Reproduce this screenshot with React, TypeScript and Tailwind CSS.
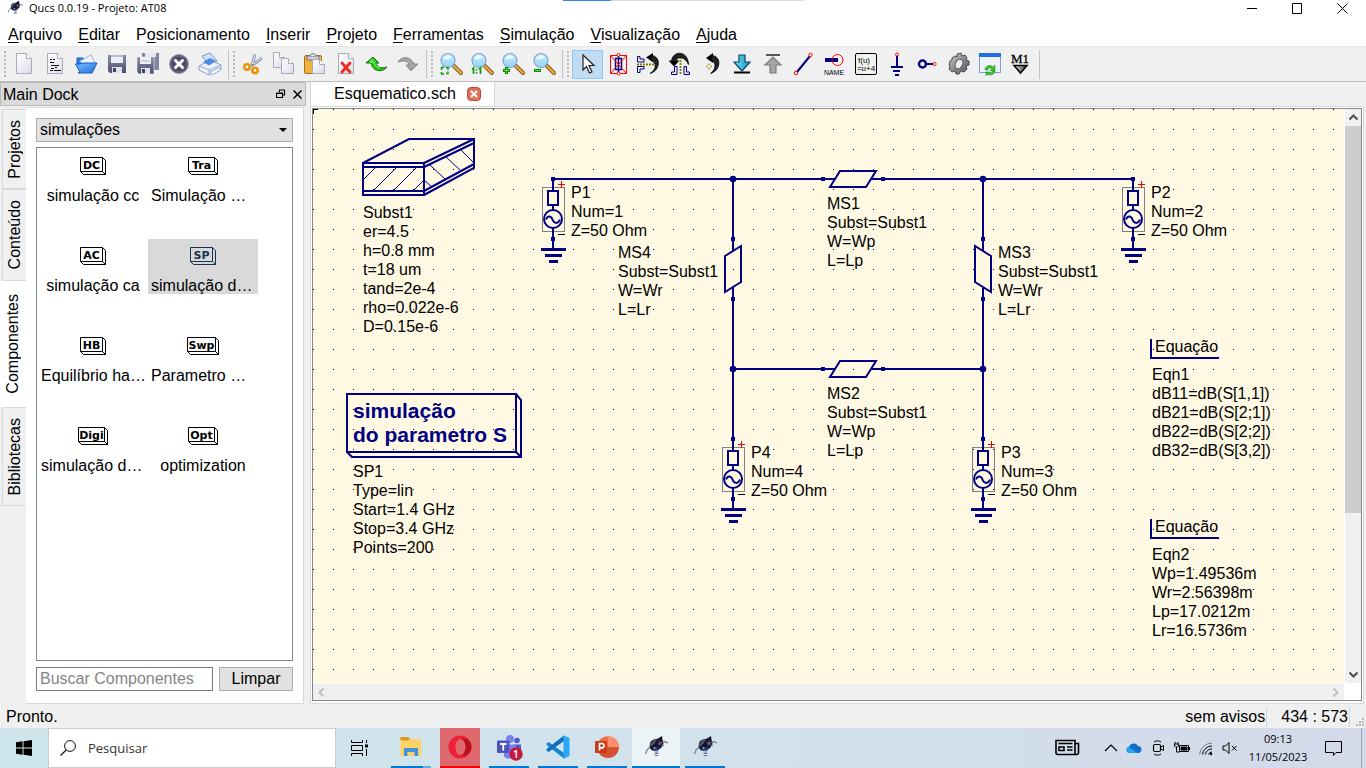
import React from 'react';

type Kids = { children?: React.ReactNode };

/* ---------- small drawing helpers ---------- */

function Ico({ children, size = 24 }: Kids & { size?: number }) {
  return (
    <svg width={size} height={size} viewBox="0 0 24 24" fill="none" aria-hidden="true" className="shrink-0 overflow-visible">
      {children}
    </svg>
  );
}

const NAVY = '#000080';

function Wasp({ size }: { size: number }) {
  return (
    <svg width={size} height={size} viewBox="0 0 24 24" fill="none" aria-hidden="true" className="shrink-0">
      <path d="M6 8c1-3 4-4 7-4l5-3 .5 3.500 1 4-2 4-4 3H8l-2.500-3z" fill="#17162c" />
      <path d="M6 9 9.500 5 13 5 9 10l-2 2z" fill="#55536b" />
      <path d="M14 8l2-2 1.500 2-2 3z" fill="#6d5a86" />
      <path d="M6 12 3 15 1.500 19" stroke="#7d7f93" strokeWidth="1.300" />
      <path d="M17 8l4-1.500L24 8M17 10l3 .5" stroke="#62607a" strokeWidth="1.100" />
      <path d="M9 12h5l1 2-2 2h-3z" fill="#24356f" />
      <path d="M12.500 15v6" stroke="#5a6a9a" strokeWidth="3.500" />
      <path d="M10.500 17h4M11 19.500h3.500" stroke="#f1f3fa" strokeWidth="1.200" />
      <circle cx="10.500" cy="13" r="1" fill="#8fb0e0" />
    </svg>
  );
}

function Page({ x = 5, y = 2, w = 15, h = 20 }: { x?: number; y?: number; w?: number; h?: number }) {
  const l = x - 0.5;
  const t = y - 0.5;
  return (
    <>
      <path d={`M${l} ${t}h${w - 5}l5 5v${h - 5}h-${w}z`} fill="url(#gPage)" stroke="#a9a9b8" />
      <path d={`M${l + w - 5} ${t}v5h5`} fill="#fff" stroke="#a9a9b8" />
    </>
  );
}

function Lens({ children }: Kids) {
  return (
    <Ico>
      <path d="M14 13l8 8" stroke="#8a5a12" strokeWidth="4" strokeLinecap="round" />
      <path d="M15 14l7 7" stroke="#e9a94a" strokeWidth="2.200" strokeLinecap="round" />
      <circle cx="9" cy="8.500" r="7" fill="url(#gLens)" stroke="#7fa6d8" strokeWidth="1.200" />
      <path d="M4 7a5.500 5.500 0 0 1 9-2c-3 2-5 3-9 2z" fill="#fff" opacity=".75" />
      {children}
    </Ico>
  );
}

function SharedPaints() {
  return (
    <svg width="0" height="0" className="absolute" aria-hidden="true">
      <defs>
        <linearGradient id="gPage" x1="0" y1="0" x2="1" y2="1">
          <stop offset="0" stopColor="#fff" />
          <stop offset="1" stopColor="#dcdcea" />
        </linearGradient>
        <linearGradient id="gLens" x1="0" y1="0" x2="0" y2="1">
          <stop offset="0" stopColor="#cdeafb" />
          <stop offset="1" stopColor="#8fd6f4" />
        </linearGradient>
        <linearGradient id="gFloppy" x1="0" y1="0" x2="0" y2="1">
          <stop offset="0" stopColor="#8b8ba5" />
          <stop offset="1" stopColor="#4f4f70" />
        </linearGradient>
        <linearGradient id="gFolder" x1="0" y1="0" x2="1" y2="1">
          <stop offset="0" stopColor="#7fc0ff" />
          <stop offset="1" stopColor="#1d6fe0" />
        </linearGradient>
        <linearGradient id="gSteel" x1="0" y1="0" x2="1" y2="1">
          <stop offset="0" stopColor="#d8d8d8" />
          <stop offset=".5" stopColor="#8a8a90" />
          <stop offset="1" stopColor="#55555c" />
        </linearGradient>
        <linearGradient id="gDown" x1="0" y1="0" x2="1" y2="0">
          <stop offset="0" stopColor="#7be3f7" />
          <stop offset="1" stopColor="#1793c4" />
        </linearGradient>
        <linearGradient id="gMark" x1="0" y1="0" x2="1" y2="0">
          <stop offset="0" stopColor="#e0e0e0" />
          <stop offset="1" stopColor="#3a3a3a" />
        </linearGradient>
        <pattern id="gridDots" width="20" height="20" patternUnits="userSpaceOnUse">
          <rect width="1" height="1" fill="#000" />
        </pattern>
      </defs>
    </svg>
  );
}

/* ---------- toolbar ---------- */

const fileTools: [string, React.ReactNode][] = [
  ['Novo', <Ico><Page /></Ico>],
  ['Novo texto', (
    <Ico>
      <Page />
      <path d="M7 7.500h2M10 7.500h2M7 10.500h4M8 13.500h8M8 16.500h3M12 15.500h2M7 18.500h3M11 18.500h7" stroke="#111" />
    </Ico>
  )],
  ['Abrir', (
    <Ico>
      <path d="M3 6h6l2 2h8v4H3z" fill="#2f7fe6" stroke="#1458b5" />
      <path d="M6 9 17 3l4 8-9 6z" fill="#eef4fc" stroke="#9fb6d6" />
      <path d="M6 20 1.500 12H6l3-1h14l-5 10H4z" fill="url(#gFolder)" stroke="#1458c5" />
    </Ico>
  )],
  ['Salvar', (
    <Ico>
      <path d="M3 3h18v18H5l-2-2z" fill="url(#gFloppy)" />
      <path d="M6 3h12v8H6z" fill="#eceff6" />
      <path d="M6 3h12v2H6z" fill="#b9bdd0" />
      <path d="M7 15h10v6H7z" fill="#dfe3ee" />
      <path d="M8 16h3v4H8z" fill="#42425f" />
    </Ico>
  )],
  ['Salvar tudo', (
    <Ico>
      <path d="M6 1h17v17H6z" fill="#8585a0" />
      <path d="M9 1h11v4H9z" fill="#e6e8f1" />
      <path d="M1 5h17v17H3l-2-2z" fill="url(#gFloppy)" stroke="#efeff5" strokeWidth=".6" />
      <path d="M4 5h11v7H4z" fill="#eceff6" />
      <path d="M5 9h9" stroke="#a9adc0" />
      <path d="M5 16h9v6H5z" fill="#dfe3ee" />
      <path d="M6 17h3v4H6z" fill="#42425f" />
    </Ico>
  )],
  ['Fechar', (
    <Ico>
      <circle cx="12" cy="12" r="9.500" fill="#4c4c68" stroke="#a3a3b5" />
      <circle cx="12" cy="12" r="8" stroke="#6d6d88" />
      <path d="M8.500 8.500l7 7M15.500 8.500l-7 7" stroke="#fff" strokeWidth="3" strokeLinecap="round" />
    </Ico>
  )],
  ['Imprimir', (
    <Ico>
      <path d="M4 4 12 1l7 8-8 4z" fill="#cfe3fb" stroke="#6d97d6" />
      <path d="M1 14 12 8l11 5v4l-12 6L1 18z" fill="#eef1f8" stroke="#8b9fca" />
      <path d="M1 14l10 4 12-5M11 18v5" stroke="#9aa9cf" />
      <path d="M5 10l7-4 6 3-7 4.500z" fill="#4a8ae6" />
      <path d="M12 20l9-4.500 2 2-8 5z" fill="#fff" stroke="#7fa2dc" />
    </Ico>
  )],
];

const editTools: [string, React.ReactNode][] = [
  ['Recortar', (
    <Ico>
      <path d="M14 2 11 14M21 6 10 14" stroke="#8e98a8" strokeWidth="3" />
      <path d="M14 2 11.500 12M21 6 12 12" stroke="#e8edf4" />
      <circle cx="6" cy="15" r="2.700" stroke="#e8960c" strokeWidth="2.600" />
      <circle cx="14" cy="18.500" r="2.700" stroke="#e8960c" strokeWidth="2.600" />
    </Ico>
  )],
  ['Copiar', (
    <Ico>
      <Page x={2} y={1} w={11} h={15} />
      <Page x={10} y={7} w={12} h={15} />
    </Ico>
  )],
  ['Colar', (
    <Ico>
      <rect x="1.500" y="3.500" width="17" height="18" rx="1.500" fill="#efb13c" stroke="#a9741a" />
      <path d="M4 4h12v4H4z" fill="#cfcfd8" stroke="#77777f" />
      <path d="M7 4c0-3 6-3 6 0" stroke="#77777f" fill="#e5e5ea" />
      <Page x={10} y={8} w={12} h={14} />
    </Ico>
  )],
  ['Apagar', (
    <Ico>
      <Page />
      <path d="M8 11l8 9M16 11l-8 9" stroke="#ee2b1a" strokeWidth="2.800" strokeLinecap="round" />
    </Ico>
  )],
  ['Desfazer', (
    <Ico>
      <path d="M1 11 8 5l6 6h-3c1 4 5 6 11 4-3 5-14 6-16-4z" fill="#28c41a" stroke="#0d7a0a" strokeLinejoin="round" />
      <path d="M8 7l-3 3h4c1 4 3 5 6 6" stroke="#a7f29b" />
    </Ico>
  )],
  ['Refazer', (
    <Ico>
      <path d="M22 12 15 19l-5-6h3c-1-4-5-5-11-3 3-6 13-6 16 2z" fill="#a6a6a6" stroke="#858585" strokeLinejoin="round" />
    </Ico>
  )],
];

const zoomTools: [string, React.ReactNode][] = [
  ['Ver tudo', <Lens><path d="M2.500 18v-2.500H5M7 15.500h2V18M2.500 20v2H5M7 21.500h2v-2" stroke="#159a10" strokeWidth="1.500" /></Lens>],
  ['Ver 1:1', (
    <Lens>
      <path d="M2 17.500 3.500 16v6M9 17.500 10.500 16v6M6.500 17v1.500M6.500 20v1.500" stroke="#159a10" strokeWidth="1.700" />
    </Lens>
  )],
  ['Aproximar', <Lens><path d="M2 18.500h7M5.500 15v7" stroke="#0c8a08" strokeWidth="3.200" /><path d="M3 18.500h5M5.500 16v5" stroke="#5fe04a" /></Lens>],
  ['Afastar', <Lens><path d="M2 18.500h7" stroke="#0c8a08" strokeWidth="3" /><path d="M3 18.500h5" stroke="#5fe04a" /></Lens>],
];

const drawTools: [string, React.ReactNode][] = [
  ['Selecionar', (
    <Ico>
      <path d="M8 3v15l3.500-3.500 3 6.500 2.500-1-3-6.500h5z" fill="#fff" stroke="#222" strokeWidth="1.200" />
    </Ico>
  )],
  ['Desativar', (
    <Ico>
      <path d="M12.500 2v20M9.500 6.500h6v11h-6z" stroke={NAVY} strokeWidth="1.500" />
      <path d="M4.500 3.500h16v18h-16zM4.500 3.500l16 18M20.500 3.500l-16 18" stroke="#ff0000" />
      <circle cx="12.500" cy="3" r="1.500" fill="#fff" stroke="#ff0000" />
      <circle cx="12.500" cy="21.500" r="1.500" fill="#fff" stroke="#ff0000" />
    </Ico>
  )],
  ['Espelhar no eixo X', (
    <Ico>
      <path d="M.5 10V4.500h2.500V7H7v3zM.5 20.500v-6H7v2.500H3v3.500z" stroke={NAVY} />
      <path d="M0 12.500h17" stroke="#808000" strokeWidth="1.800" strokeDasharray="2 1" />
      <path d="M9 5.500 16 1v9z" fill="#000" />
      <path d="M14 3.500c10 0 10 15-1 18 6-3.500 7.500-11 1-13z" fill="#222" stroke="#000" strokeWidth=".8" />
    </Ico>
  )],
  ['Espelhar no eixo Y', (
    <Ico>
      <path d="M3.500 22.500V20h3v-5.500H9v8zM21.500 22.500V20h-3v-5.500H16v8z" stroke={NAVY} />
      <path d="M12.500 5v18" stroke="#808000" strokeWidth="1.800" strokeDasharray="2 1" />
      <path d="M.5 8.500h11l-5.500 6z" fill="#000" />
      <path d="M3.500 9.500C4-1.500 20-2.500 20.500 12.500 17 4.500 9 3.500 8 9.500z" fill="#222" stroke="#000" strokeWidth=".8" />
    </Ico>
  )],
  ['Girar', (
    <Ico>
      <path d="M7 6 14 1v10z" fill="#000" />
      <path d="M12.500 3.500c10 0 10 15-1 18 5-3.500 6.500-11 1-13z" fill="#222" stroke="#000" strokeWidth=".8" />
      <path d="M10 11.500v6M7 14.500h6" stroke="#b39a3a" strokeWidth="1.500" />
      <path d="M10 13l1.500 1.500L10 16l-1.500-1.500z" fill="#fff" />
    </Ico>
  )],
  ['Entrar na hierarquia', (
    <Ico>
      <path d="M9 3h6v7h5l-8 9-8-9h5z" fill="url(#gDown)" stroke="#0b4a6a" strokeWidth="1.200" />
      <path d="M4 20.500h16" stroke="#000" strokeWidth="2" />
    </Ico>
  )],
  ['Sair da hierarquia', (
    <Ico>
      <path d="M9 21h6v-8h5l-8-8-8 8h5z" fill="#a5a5a5" stroke="#7b7b7b" strokeWidth="1.200" />
      <path d="M5 3h14" stroke="#555" strokeWidth="2" />
    </Ico>
  )],
  ['Fio', (
    <Ico>
      <path d="M5 20 18 4" stroke={NAVY} strokeWidth="2" />
      <circle cx="4" cy="21" r="1.700" stroke="#f00" fill="#fff" />
      <circle cx="18.500" cy="3" r="1.700" stroke="#f00" fill="#fff" />
    </Ico>
  )],
  ['Rótulo do fio', (
    <Ico>
      <path d="M2 8h13" stroke={NAVY} strokeWidth="4" />
      <circle cx="14.500" cy="8" r="5.500" stroke="#f00" />
      <text x="11" y="22.500" textAnchor="middle" fontFamily="Liberation Sans, sans-serif" fontSize="7" fill="#000">NAME</text>
    </Ico>
  )],
  ['Inserir equação', (
    <Ico>
      <rect x="1.500" y="1.500" width="21" height="21" rx="1.500" stroke="#000" />
      <text x="10" y="10.500" textAnchor="middle" fontFamily="Liberation Sans, sans-serif" fontSize="8" fill="#000">f(u)</text>
      <text x="12" y="19" textAnchor="middle" fontFamily="Liberation Sans, sans-serif" fontSize="8" fill="#000">=u+4</text>
    </Ico>
  )],
  ['Inserir terra', (
    <Ico>
      <path d="M12 4v11M6 15h12M8 19h7M10 23h4" stroke={NAVY} strokeWidth="2" />
      <circle cx="12" cy="2.500" r="1.500" stroke="#f00" fill="#fff" />
    </Ico>
  )],
  ['Inserir porta', (
    <Ico>
      <circle cx="6.500" cy="12" r="3.500" stroke={NAVY} strokeWidth="2.400" />
      <path d="M10.500 12H17" stroke={NAVY} strokeWidth="2" />
      <circle cx="18.500" cy="12" r="1.600" stroke="#f00" fill="#fff" />
    </Ico>
  )],
  ['Simular', (
    <Ico>
      <path
        d="M10 2l4-1 1 3 3-1 2 3-1 2 3 1v4l-3 1 1 3-3 3-3-1-2 3H9l-1-3-3 1-3-3 1-3-1-1 1-4 2-1V6l3-2 2 1z"
        fill="url(#gSteel)" stroke="#4d4d54"
      />
      <ellipse cx="12" cy="12" rx="3.500" ry="5" transform="rotate(25 12 12)" fill="#efefef" stroke="#5a5a60" />
    </Ico>
  )],
  ['Ver dados', (
    <Ico>
      <rect x="1.500" y="1.500" width="21" height="19" fill="#eef3fb" stroke="#7b9fdd" />
      <path d="M1 1h22v4H1z" fill="#1f6fe8" />
      <path d="M7 18c0-4 5-6 8-3l2-2v6h-5l2-2c-2-2-4-1-4 1z" fill="#35c425" stroke="#17820f" strokeWidth=".5" />
      <path d="M17 19c-1 4-5 5-8 3l-1 2v-4h4l-1 1c2 1 3 0 4-2z" fill="#35c425" stroke="#17820f" strokeWidth=".5" />
    </Ico>
  )],
  ['Marcador', (
    <Ico>
      <text x="11" y="11" textAnchor="middle" fontFamily="Liberation Serif, serif" fontSize="13" fill="#000" stroke="#000" strokeWidth=".3">M1</text>
      <path d="M5 13.500h13L11.500 21z" fill="url(#gMark)" stroke="#000" strokeWidth="1.500" />
    </Ico>
  )],
];

function ToolGroup({ tools, pressed }: { tools: [string, React.ReactNode][]; pressed?: string }) {
  return (
    <div className="flex items-center border-r border-[#c4c4c4] pr-0.5">
      <div className="ml-1 mr-0.5 h-[26px] w-[3px] border-l-2 border-dotted border-[#b9b9b9]" />
      {tools.map(([name, icon]) => (
        <button
          key={name}
          type="button"
          aria-label={name}
          className={
            name === pressed
              ? 'flex h-[29px] w-[31px] items-center justify-center border border-[#90c8f6] bg-[#c0dcf3] pb-px pr-px'
              : 'flex h-[29px] w-[31px] items-center justify-center pb-px pr-px'
          }
        >
          {icon}
        </button>
      ))}
    </div>
  );
}

/* ---------- dock ---------- */

function SimIcon({ label, w, dim }: { label: string; w: number; dim?: boolean }) {
  const c = dim ? '#16334f' : '#000';
  return (
    <svg width={w} height="18" viewBox={`0 0 ${w} 18`} fill="none" aria-hidden="true" className="shrink-0 overflow-visible">
      <path
        d={`M.5 .5H${w - 3.5}V14.500H.5zM${w - 3.5} .5L${w - 0.5} 3.500V17.500H3.500L.5 14.500M${w - 3.5} 14.500L${w - 0.5} 17.500`}
        stroke={c}
        fill={dim ? 'none' : '#fff'}
      />
      <text
        x={(w - 3) / 2}
        y="11.500"
        textAnchor="middle"
        fontFamily="DejaVu Sans, sans-serif"
        fontWeight="bold"
        fontSize="11"
        fill={c}
      >
        {label}
      </text>
    </svg>
  );
}

const components = [
  { tag: 'DC', w: 26, name: 'simulação cc' },
  { tag: 'Tra', w: 30, name: 'Simulação …', cut: true },
  { tag: 'AC', w: 26, name: 'simulação ca' },
  { tag: 'SP', w: 26, name: 'simulação d…', cut: true, selected: true },
  { tag: 'HB', w: 26, name: 'Equilíbrio ha…', cut: true },
  { tag: 'Swp', w: 32, name: 'Parametro …', cut: true },
  { tag: 'Digi', w: 30, name: 'simulação d…', cut: true },
  { tag: 'Opt', w: 30, name: 'optimization' },
];

const sideTabs = [
  { name: 'Projetos', h: 'h-20' },
  { name: 'Conteúdo', h: 'h-[92px]' },
  { name: 'Componentes', h: 'h-[126px]', on: true },
  { name: 'Bibliotecas', h: 'h-[99px]' },
];

function Dock() {
  return (
    <aside className="flex w-[306px] shrink-0 flex-col">
      <div className="flex h-6 items-center border border-[#bcbcbc] bg-[#dadada] pl-0.5">
        <h2 className="flex-1 pt-0.5 text-base leading-5">Main Dock</h2>
        <button type="button" aria-label="Destacar painel" className="flex h-4 w-4 items-center justify-center">
          <svg width="10" height="10" viewBox="0 0 10 10" fill="none">
            <path d="M3.500 3V1M8.500 1v5H7M3 1h6M.5 4.500h6v4h-6zM0 4h7" stroke="#000" strokeWidth="1.200" />
          </svg>
        </button>
        <button type="button" aria-label="Fechar painel" className="flex h-4 w-4 items-center justify-center">
          <svg width="9" height="9" viewBox="0 0 9 9" fill="none">
            <path d="M.5 .5l8 8M8.500 .5l-8 8" stroke="#000" strokeWidth="1.500" />
          </svg>
        </button>
      </div>
      <div className="flex flex-1 pt-px">
        <div role="tablist" aria-orientation="vertical" className="flex w-[26px] flex-col items-end pt-0.5">
          {sideTabs.map((t) => (
            <button
              key={t.name}
              type="button"
              role="tab"
              aria-selected={!!t.on}
              className={`${t.h} flex items-center justify-center border-[#d9d9d9] text-base leading-5 ${
                t.on ? 'w-full bg-white' : 'w-6 border border-r-0 bg-[#f0f0f0]'
              }`}
            >
              <span className="rotate-180 [writing-mode:vertical-rl]">{t.name}</span>
            </button>
          ))}
        </div>
        <div className="mr-0.5 flex flex-1 flex-col border border-l-0 border-[#d9d9d9] bg-white px-2.5 pb-3 pt-2.5">
          <div className="relative">
            <select
              aria-label="Categoria"
              className="block h-6 w-full appearance-none border border-[#adadad] bg-[#e1e1e1] px-[3px] text-base leading-5"
            >
              <option>simulações</option>
            </select>
            <svg width="8" height="4" viewBox="0 0 8 4" className="pointer-events-none absolute right-1.5 top-2.5">
              <path d="M0 0h8L4 4z" fill="#000" />
            </svg>
          </div>
          <div className="mt-[5px] flex-1 border border-[#828790] pl-px pt-px">
            <ul className="grid w-[220px] grid-cols-2 gap-y-[35px]">
              {components.map((c) => (
                <li
                  key={c.tag}
                  className={`flex h-[55px] flex-col items-center px-[3px] pt-2 ${c.selected ? 'bg-[#d9d9d9]' : ''}`}
                >
                  <SimIcon label={c.tag} w={c.w} dim={c.selected} />
                  <span className={`mt-[11px] w-full whitespace-nowrap text-base leading-5 ${c.cut ? 'text-left' : 'text-center'}`}>
                    {c.name}
                  </span>
                </li>
              ))}
            </ul>
          </div>
          <div className="mt-1.5 flex gap-1.5">
            <input
              type="text"
              aria-label="Buscar Componentes"
              placeholder="Buscar Componentes"
              className="h-6 w-[177px] border border-[#7a7a7a] bg-white px-[3px] text-base leading-5 placeholder:text-[#858585]"
            />
            <button type="button" className="h-6 flex-1 border border-[#adadad] bg-[#e1e1e1] text-base leading-5">
              Limpar
            </button>
          </div>
        </div>
      </div>
    </aside>
  );
}

/* ---------- schematic ---------- */

function Pin({ x, y }: { x: number; y: number }) {
  return <rect x={x - 2} y={y - 2} width="4" height="4" fill={NAVY} stroke="none" />;
}

function Joint({ x, y }: { x: number; y: number }) {
  return <circle cx={x} cy={y} r="3.300" fill={NAVY} />;
}

function PowerPort({ x, y }: { x: number; y: number }) {
  return (
    <g transform={`translate(${x} ${y})`} stroke={NAVY} strokeWidth="2">
      <rect x="-10.500" y="8.500" width="22" height="44" stroke="#808080" strokeWidth="1" />
      <path d="M0 0v12M-5 12H5V26H-5zM0 26v5M0 49V70" />
      <circle cx="0" cy="40" r="9" />
      <path d="M-7 40.500c1.500-4 5-4 6.500 0s5.500 5 7.500 0" />
      <path d="M-12 70.500H13M-8 76.500H9M-4 82.500H5" strokeWidth="3" />
      <path d="M5 5.500h7M8.500 2v7" stroke="#e00" strokeWidth="1" />
      <path d="M5 55.500h7" stroke="#000" strokeWidth="1" />
      <Pin x={0} y={0} />
      <Pin x={0} y={60} />
    </g>
  );
}

function LineH({ x, y }: { x: number; y: number }) {
  return (
    <g transform={`translate(${x} ${y})`}>
      <path d="M-30 0H-18M18 0H30M-13-8H23L13 8H-23z" stroke={NAVY} strokeWidth="2" />
      <Pin x={-30} y={0} />
      <Pin x={30} y={0} />
    </g>
  );
}

function LineV({ x, y, flip }: { x: number; y: number; flip?: boolean }) {
  return (
    <g transform={`translate(${x} ${y})`}>
      <path
        d={flip ? 'M0-30V-18M0 18V30M-8-23V13L8 23V-13z' : 'M0-30V-18M0 18V30M8-23V13L-8 23V-13z'}
        stroke={NAVY}
        strokeWidth="2"
      />
      <Pin x={0} y={-30} />
      <Pin x={0} y={30} />
    </g>
  );
}

const notes: { at: string; lines: string[] }[] = [
  { at: 'left-[50px] top-[94px]', lines: ['Subst1', 'er=4.5', 'h=0.8 mm', 't=18 um', 'tand=2e-4', 'rho=0.022e-6', 'D=0.15e-6'] },
  { at: 'left-[258px] top-[74px]', lines: ['P1', 'Num=1', 'Z=50 Ohm'] },
  { at: 'left-[305px] top-[134px]', lines: ['MS4', 'Subst=Subst1', 'W=Wr', 'L=Lr'] },
  { at: 'left-[514px] top-[85px]', lines: ['MS1', 'Subst=Subst1', 'W=Wp', 'L=Lp'] },
  { at: 'left-[685px] top-[134px]', lines: ['MS3', 'Subst=Subst1', 'W=Wr', 'L=Lr'] },
  { at: 'left-[838px] top-[74px]', lines: ['P2', 'Num=2', 'Z=50 Ohm'] },
  { at: 'left-[514px] top-[275px]', lines: ['MS2', 'Subst=Subst1', 'W=Wp', 'L=Lp'] },
  { at: 'left-[438px] top-[334px]', lines: ['P4', 'Num=4', 'Z=50 Ohm'] },
  { at: 'left-[688px] top-[334px]', lines: ['P3', 'Num=3', 'Z=50 Ohm'] },
  { at: 'left-[40px] top-[353px]', lines: ['SP1', 'Type=lin', 'Start=1.4 GHz', 'Stop=3.4 GHz', 'Points=200'] },
  { at: 'left-[842px] top-[228px]', lines: ['Equação'] },
  { at: 'left-[839px] top-[256px]', lines: ['Eqn1', 'dB11=dB(S[1,1])', 'dB21=dB(S[2;1])', 'dB22=dB(S[2;2])', 'dB32=dB(S[3,2])'] },
  { at: 'left-[842px] top-[408px]', lines: ['Equação'] },
  { at: 'left-[839px] top-[436px]', lines: ['Eqn2', 'Wp=1.49536m', 'Wr=2.56398m', 'Lp=17.0212m', 'Lr=16.5736m'] },
];

function Schematic() {
  return (
    <div className="relative min-w-0 flex-1 overflow-hidden bg-[#fff9e3]">
      <svg className="absolute inset-0 h-full w-full" fill="none" aria-hidden="true">
        <rect width="100%" height="100%" fill="url(#gridDots)" />
        <path d="M0 .5H5M.5 0V5" stroke="#000" />
        <g stroke={NAVY} strokeWidth="2">
          <path d="M240 70H510M570 70H820M420 70V130M420 190V330M670 70V130M670 190V330M420 260H510M570 260H670" />
          <path d="M50 54H111V86H50zM50 58H111M50 82H111M50 54 96 30H161V59L111 86M111 54 161 30M111 58 161 34M111 82 161 55" />
          <path d="M34 285H203V343H34zM203 285 208 291V348H39L34 343M203 343 208 348" />
          <path d="M838 230V249H906M838 410V429H906" />
        </g>
        <path
          d="M50 71 63 58M60 82 84 58M80 82 104 58M100 82 111 71M111 71 119 78M117 56 132 70M133 48 147 61M148 41 160 53"
          stroke={NAVY}
        />
        <Joint x={420} y={70} />
        <Joint x={670} y={70} />
        <Joint x={420} y={260} />
        <Joint x={670} y={260} />
        <PowerPort x={240} y={70} />
        <PowerPort x={820} y={70} />
        <PowerPort x={420} y={330} />
        <PowerPort x={670} y={330} />
        <LineH x={540} y={70} />
        <LineH x={540} y={260} />
        <LineV x={420} y={160} />
        <LineV x={670} y={160} flip />
      </svg>
      <div className="absolute left-10 top-[290px] whitespace-nowrap text-[21px] font-bold leading-6 text-[#000080]">
        simulação
        <br />
        do parametro S
      </div>
      {notes.map((n) => (
        <div key={n.at} className={`absolute whitespace-nowrap text-base leading-[19px] ${n.at}`}>
          {n.lines.map((l) => (
            <div key={l}>{l}</div>
          ))}
        </div>
      ))}
    </div>
  );
}

function Chevron({ d, tone }: { d: string; tone: string }) {
  return (
    <svg width="9" height="9" viewBox="0 0 9 9" fill="none" aria-hidden="true">
      <path d={d} stroke={tone} strokeWidth="2" />
    </svg>
  );
}

function Editor() {
  return (
    <main className="ml-1 mr-0.5 flex min-w-0 flex-1 flex-col">
      <div role="tablist" className="flex h-[25px] border-b border-[#d9d9d9]">
        <div role="tab" aria-selected="true" className="flex w-[185px] items-center border-x border-[#d9d9d9] bg-white pl-[23px]">
          <span className="text-base leading-5">Esquematico.sch</span>
          <button type="button" aria-label="Fechar Esquematico.sch" className="ml-[11px] flex h-3.5 w-3.5 items-center justify-center rounded-sm border border-[#c8452f] bg-[#e2725b]">
            <svg width="8" height="8" viewBox="0 0 8 8">
              <path d="M1 1l6 6M7 1L1 7" stroke="#fff" strokeWidth="2" />
            </svg>
          </button>
        </div>
      </div>
      <div className="flex flex-1 border-x border-b border-[#d9d9d9] bg-white px-px pb-0.5 pt-px">
        <div className="flex flex-1 flex-col border border-[#828790] bg-white">
          <div className="flex flex-1">
            <Schematic />
            <div className="ml-px flex w-4 flex-col items-center bg-[#f0f0f0]">
              <div className="flex h-[17px] items-center"><Chevron d="M.5 6.500 4.500 2.500l4 4" tone="#505050" /></div>
              <div className="h-[387px] w-full bg-[#cdcdcd]" />
              <div className="flex-1" />
              <div className="flex h-[17px] items-center"><Chevron d="M.5 2.500l4 4 4-4" tone="#505050" /></div>
            </div>
          </div>
          <div className="mr-[17px] flex h-[17px] items-center justify-between border-t border-white bg-[#f0f0f0] px-1">
            <Chevron d="M6.500 .5 2.500 4.500l4 4" tone="#bfbfbf" />
            <Chevron d="M2.500 .5l4 4-4 4" tone="#bfbfbf" />
          </div>
        </div>
      </div>
    </main>
  );
}

/* ---------- taskbar ---------- */

const apps: { name: string; tile: string; bar: string; icon: React.ReactNode }[] = [
  {
    name: 'Explorador de Arquivos', tile: 'w-10', bar: 'bg-[linear-gradient(90deg,#0078d7_80%,#66aee3_80%)]',
    icon: (
      <Ico>
        <path d="M1.500 2h8l1.500 2h11v17h-20.500z" fill="#fbd264" />
        <path d="M1.500 2h8l1 2-1.500 1.500H1.500z" fill="#d99a1c" />
        <path d="M5 21v-8h14v8h-3.500v-4h-7v4z" fill="#3f92dc" />
      </Ico>
    ),
  },
  {
    name: 'Opera', tile: 'w-10 bg-[#de6a70]', bar: 'bg-[#f00000]',
    icon: (
      <Ico>
        <path fillRule="evenodd" d="M12 .5a11.500 11.500 0 1 0 0 23 11.500 11.500 0 1 0 0-23zM12.500 4c3 0 5 3.500 5 8s-2 8-5 8-5-3.500-5-8 2-8 5-8z" fill="#ee2136" />
        <path d="M12.500 4c3-2.500 11 .5 11 8s-8 10.500-11 8c3 0 5-3.500 5-8s-2-8-5-8z" fill="#b8101f" />
      </Ico>
    ),
  },
  {
    name: 'Teams', tile: 'w-10', bar: 'bg-[#0078d7]',
    icon: (
      <svg width="28" height="28" viewBox="0 0 28 28" aria-hidden="true">
        <circle cx="22" cy="7.500" r="2.800" fill="#5059c9" />
        <circle cx="15" cy="6" r="4" fill="#7b83eb" />
        <path d="M19 11.500h7v6a5 5 0 0 1-7 4z" fill="#5059c9" />
        <path d="M9 11.500h12v8a7 7 0 0 1-12 4z" fill="#7b83eb" />
        <rect x="2" y="7.500" width="12.500" height="12.500" rx="1" fill="#4b53bc" />
        <path d="M5 11h6.500M8.250 11v6.500" stroke="#fff" strokeWidth="1.800" />
        <circle cx="21" cy="21" r="6.700" fill="#c4183c" />
        <text x="21" y="25" textAnchor="middle" fontFamily="Open Sans, sans-serif" fontSize="11" fontWeight="600" fill="#fff">1</text>
      </svg>
    ),
  },
  {
    name: 'Visual Studio Code', tile: 'w-10', bar: 'bg-[#0078d7]',
    icon: (
      <Ico>
        <path d="M.5 8.500 2.500 7 18 18v5.500L.5 10z" fill="#1785d0" />
        <path d="M.5 15.500 2.500 17 18 6V.5L.5 14z" fill="#0a6fbf" />
        <path d="M17.500 .2 23.500 3v18l-6 2.800z" fill="#2aa7f5" />
      </Ico>
    ),
  },
  {
    name: 'PowerPoint', tile: 'w-10', bar: 'bg-[#0078d7]',
    icon: (
      <Ico>
        <circle cx="13" cy="12" r="10.800" fill="#ed6c47" />
        <path d="M13 1.200A10.800 10.800 0 0 1 23.800 12H13z" fill="#ff8f6b" />
        <path d="M2.200 12h21.600A10.800 10.800 0 0 1 13 22.800 10.800 10.800 0 0 1 2.200 12z" fill="#d35230" />
        <rect x="0" y="6" width="12" height="12" rx="1" fill="#c43e1c" />
        <path d="M4.500 15.500v-7h2.300a2.200 2.200 0 0 1 0 4.400H4.500" stroke="#fff" strokeWidth="1.600" />
      </Ico>
    ),
  },
  { name: 'Qucs', tile: 'w-12 bg-[#ebf3f7]', bar: 'bg-[#0078d7]', icon: <Wasp size={24} /> },
  { name: 'Qucs', tile: 'w-10', bar: 'bg-[#0078d7]', icon: <Wasp size={24} /> },
];

function Taskbar() {
  return (
    <footer className="flex h-10 items-stretch bg-linear-to-r from-[#cde6ec] via-[#d2e2ec] to-[#d3d9e9] font-['Open_Sans',sans-serif]">
      <button type="button" aria-label="Iniciar" className="flex w-12 items-center justify-center">
        <svg width="16" height="16" viewBox="0 0 16 16" aria-hidden="true">
          <path d="M0 2.200 6.600 1.300V7.500H0zM7.500 1.200 16 0v7.500H7.500zM0 8.400h6.600v6.300L0 13.800zM7.500 8.400H16V16l-8.500-1.200z" fill="#000" />
        </svg>
      </button>
      <label className="flex w-[288px] items-center gap-3 border border-[#c9cdd0] bg-white pl-[11px]">
        <svg width="16" height="16" viewBox="0 0 16 16" fill="none" aria-hidden="true" className="shrink-0">
          <circle cx="10" cy="6" r="5.400" stroke="#111" />
          <path d="M6.200 10 .5 15.500" stroke="#111" strokeWidth="1.200" />
        </svg>
        <input
          type="text"
          aria-label="Pesquisar"
          placeholder="Pesquisar"
          className="w-full bg-transparent text-[13px] leading-5 outline-none placeholder:text-[#333]"
        />
      </label>
      <button type="button" aria-label="Visão de tarefas" className="flex w-[50px] items-center justify-center pr-1">
        <svg width="17" height="16" viewBox="0 0 17 16" fill="none" aria-hidden="true">
          <path d="M.5 0v2.500h11V0M.5 16v-2.500h11V16M.5 5.500h11v5H.5zM15.500 0v3M15.500 9v7" stroke="#000" />
          <path d="M14 4.500h3v3h-3z" fill="#000" />
        </svg>
      </button>
      <nav aria-label="Aplicativos" className="flex">
        {apps.map((a, i) => (
          <div key={i} className="flex w-[49px] justify-center">
            <button type="button" aria-label={a.name} className={`flex flex-col items-center ${a.tile}`}>
              <span className="flex flex-1 items-center">{a.icon}</span>
              <span className={`h-0.5 w-full ${a.bar}`} />
            </button>
          </div>
        ))}
      </nav>
      <div className="ml-auto flex items-center">
        <svg width="25" height="18" viewBox="0 0 25 18" fill="none" className="mr-6" aria-hidden="true">
          <path d="M1 1.500h19v14H3a2 2 0 0 1-2-2zM20 4.500h3.500v9a2 2 0 0 1-2 2H18" stroke="#000" strokeWidth="1.600" />
          <path d="M3.500 4.500h14M12 8h5.500M12 11h5.500M4 8h5v3.500H4z" stroke="#000" strokeWidth="1.600" />
        </svg>
        <div className="flex items-center gap-2">
          <svg width="14" height="16" viewBox="0 0 14 16" fill="none" aria-hidden="true">
            <path d="M1 11l6-6 6 6" stroke="#000" strokeWidth="1.200" />
          </svg>
          <svg width="16" height="16" viewBox="0 0 16 16" aria-hidden="true">
            <path d="M3.500 13a3.300 3.300 0 0 1-.4-6.500A5 5 0 0 1 12 6a3.600 3.600 0 0 1 1 7z" fill="#0f6fc9" />
            <path d="M3.500 13a3.300 3.300 0 0 1-1-6l9 6z" fill="#28a8ea" />
          </svg>
          <svg width="16" height="16" viewBox="0 0 16 16" fill="none" aria-hidden="true">
            <rect x="3.500" y="4.500" width="7" height="7" rx="1.500" stroke="#000" strokeWidth="1.200" />
            <path d="M11 7l2.500-1.500v5L11 9M4 2c2-1.500 5-1.500 7 0M4 14c2 1.500 5 1.500 7 0" stroke="#000" />
          </svg>
          <svg width="16" height="16" viewBox="0 0 16 16" fill="none" aria-hidden="true">
            <path d="M5.500 5.500h9v6h-9zM15.500 7v3" stroke="#000" />
            <path d="M7 7h6v3H7z" fill="#000" stroke="#000" />
            <path d="M1 2v2M4 2v2M.5 4h4v2l-1 1h-2l-1-1zM2.500 7v5h3" stroke="#000" />
          </svg>
          <svg width="16" height="16" viewBox="0 0 16 16" fill="none" aria-hidden="true">
            <path d="M1.500 14.500A13 13 0 0 1 14 3" stroke="#777" />
            <path d="M4.500 14.500A9.500 9.500 0 0 1 14 6M7.500 14.500A6 6 0 0 1 14 9M10.500 14.500A3.500 3.500 0 0 1 14 12" stroke="#000" />
            <circle cx="13" cy="14" r="1.200" fill="#000" />
          </svg>
          <svg width="16" height="16" viewBox="0 0 16 16" fill="none" aria-hidden="true">
            <path d="M1 6h2.500L7 2.500v11L3.500 10H1z" stroke="#000" />
            <path d="M10 6l4.500 4.500M14.500 6 10 10.500" stroke="#000" />
          </svg>
        </div>
        <div className="ml-2.5 w-[60px] text-center text-[11px] leading-[18px]">
          09:13
          <br />
          11/05/2023
        </div>
        <button type="button" aria-label="Notificações" className="ml-[17px] mr-[19px]">
          <svg width="17" height="17" viewBox="0 0 17 17" fill="none" aria-hidden="true">
            <path d="M.5 1.500h16v11H11L8.500 15.500V12.500H.5z" stroke="#000" />
          </svg>
        </button>
        <div className="h-10 w-[5px] border-l border-[#9fa9b8]" />
      </div>
    </footer>
  );
}

/* ---------- window ---------- */

const menus: [string, string, string][] = [
  ['', 'A', 'rquivo'],
  ['', 'E', 'ditar'],
  ['P', 'o', 'sicionamento'],
  ['', 'I', 'nserir'],
  ['', 'P', 'rojeto'],
  ['', 'F', 'erramentas'],
  ['', 'S', 'imulação'],
  ['', 'V', 'isualização'],
  ['', 'A', 'juda'],
];

export default function App() {
  return (
    <div className="flex min-h-screen flex-col bg-[#f0f0f0] font-['Liberation_Sans',Arial,sans-serif] text-black">
      <SharedPaints />
      <header className="relative flex h-4 items-center bg-white pl-[7px]">
        <Wasp size={16} />
        <h1 className="ml-1.5 flex-1 font-['Open_Sans',sans-serif] text-[11px] leading-4">Qucs 0.0.19 - Projeto: AT08</h1>
        <div className="absolute left-[563px] top-0 flex h-px w-[241px] bg-[#dcdcdc]">
          <div className="h-px w-12 bg-[#2d8ceb]" />
        </div>
        <div className="flex items-center gap-[35px] pr-[18px]">
          <button type="button" aria-label="Minimizar">
            <svg width="10" height="11" viewBox="0 0 10 11"><path d="M0 5.500h10" stroke="#000" /></svg>
          </button>
          <button type="button" aria-label="Maximizar">
            <svg width="10" height="11" viewBox="0 0 10 11" fill="none"><path d="M.5 .5h9v10h-9z" stroke="#000" /></svg>
          </button>
          <button type="button" aria-label="Fechar">
            <svg width="11" height="11" viewBox="0 0 11 11"><path d="M.5 .5l10 10M10.500 .5l-10 10" stroke="#000" /></svg>
          </button>
        </div>
      </header>
      <nav aria-label="Menu" className="flex h-[30px] items-center gap-4 bg-white pl-2 pt-2">
        {menus.map(([a, u, b]) => (
          <button key={a + u + b} type="button" className="text-base leading-6">
            {a}
            <span className="underline underline-offset-2">{u}</span>
            {b}
          </button>
        ))}
      </nav>
      <div className="flex h-9 items-center border-b border-[#bcbcbc] border-t border-t-[#e8e8e8]">
        <ToolGroup tools={fileTools} />
        <ToolGroup tools={editTools} />
        <ToolGroup tools={zoomTools} />
        <ToolGroup tools={drawTools} pressed="Selecionar" />
      </div>
      <div className="flex flex-1">
        <Dock />
        <Editor />
      </div>
      <div className="flex h-6 items-center pl-1.5 pr-0.5 pt-0.5 text-base leading-5">
        <span className="flex-1">Pronto.</span>
        <span className="border-r border-[#d5d5d5] pr-px">sem avisos</span>
        <span className="ml-3.5 border-r border-[#d5d5d5] pr-px">434 : 573</span>
        <svg width="8" height="10" viewBox="0 0 8 10" className="ml-1.5 self-end" aria-hidden="true">
          <path d="M6 0h2v2H6zM3 3h2v2H3zM6 3h2v2H6zM0 6h2v2H0zM3 6h2v2H3zM6 6h2v2H6z" fill="#b8b8b8" />
        </svg>
      </div>
      <Taskbar />
    </div>
  );
}
